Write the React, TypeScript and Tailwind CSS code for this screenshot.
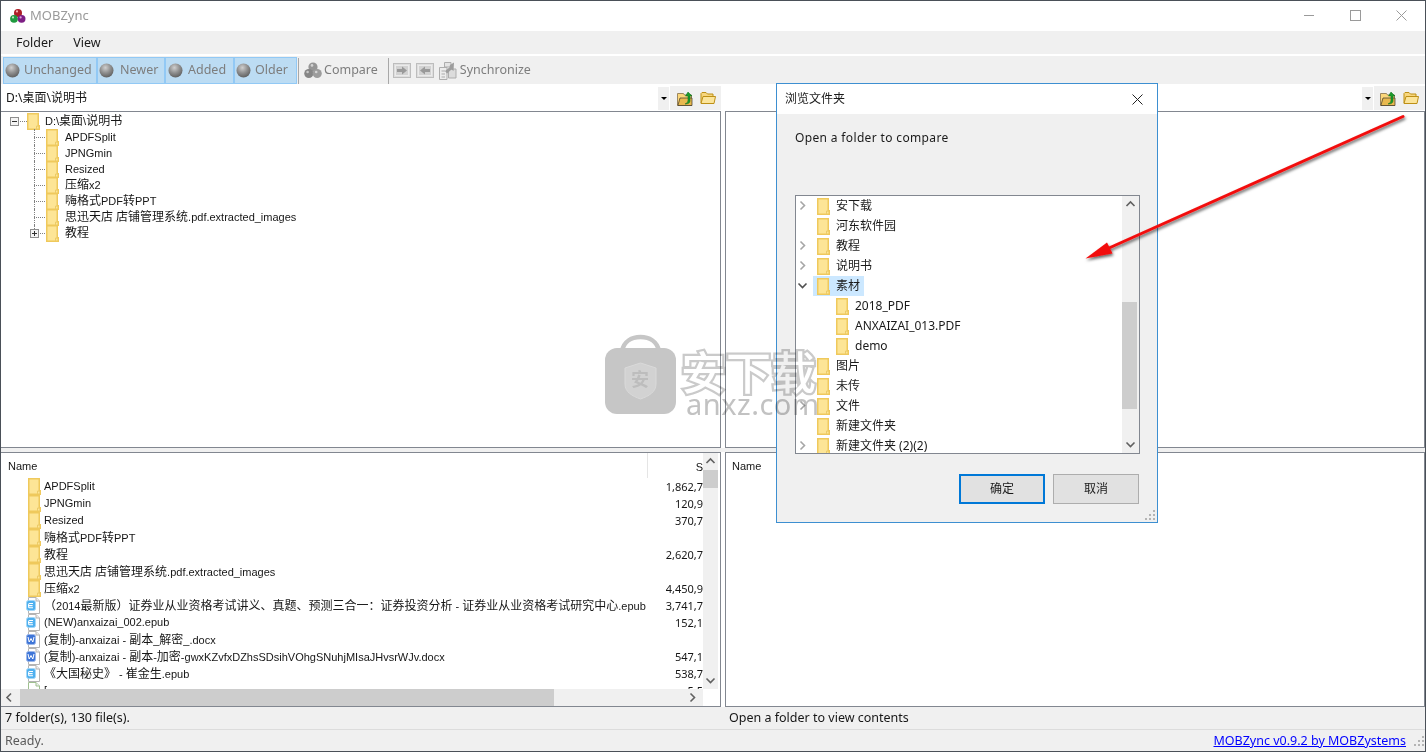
import React from "react";

const FONT = "[font-family:'Noto_Sans','Noto_Sans_CJK_SC',sans-serif]";

function Mix({ text }: { text: string }) {
  const parts = text.split(/([\u0000-\u00ff]+)/).filter(Boolean);
  return (
    <>
      {parts.map((p, i) =>
        /^[\u0000-\u00ff]+$/.test(p) ? (
          <span key={i} className="text-[11px] [font-family:'Liberation_Sans',sans-serif]">{p}</span>
        ) : (
          <span key={i} className="text-[12px]">{p}</span>
        )
      )}
    </>
  );
}

function Folder() {
  return (
    <svg width="13" height="17" viewBox="0 0 13 17" className="shrink-0">
      <path d="M0.75 0.75H11.25V12.75H12.25V16.25H0.75Z" fill="#fde596" stroke="#efc95c" strokeWidth="1.5" />
      <path d="M9.5 16V13H11.5" fill="none" stroke="#eccb68" />
    </svg>
  );
}

function Orb() {
  return (
    <svg width="18" height="18" viewBox="0 0 18 18" className="shrink-0">
      <defs>
        <radialGradient id="orb" cx="42%" cy="30%" r="72%">
          <stop offset="0" stopColor="#cfcfcf" />
          <stop offset="0.5" stopColor="#929292" />
          <stop offset="1" stopColor="#5e5e5e" />
        </radialGradient>
      </defs>
      <circle cx="8.5" cy="8.5" r="7" fill="url(#orb)" />
    </svg>
  );
}

function Toggle({ label, w, orb, text }: { label: string; w: string; orb: string; text: string }) {
  return (
    <div className={`flex items-center h-[27px] bg-[#bcdcf3] border border-[#92c9f5] text-[#7d7d7d] ${w}`}>
      <span className={orb}><Orb /></span>
      <span className={text}>{label}</span>
    </div>
  );
}

function Logo() {
  return (
    <svg width="16" height="16" viewBox="0 0 16 16" className="shrink-0">
      <circle cx="8" cy="5" r="4" fill="#ad1f27" />
      <circle cx="4" cy="10.8" r="3.9" fill="#1f9a3f" />
      <circle cx="11.6" cy="10.8" r="3.9" fill="#7d1e84" />
      <circle cx="7" cy="3.4" r="1.1" fill="#f3b2b2" />
      <circle cx="3" cy="9.4" r="1.1" fill="#b8e8c0" />
      <circle cx="10.6" cy="9.4" r="1.1" fill="#dfa4db" />
    </svg>
  );
}

function CompareIcon() {
  return (
    <svg width="18" height="17" viewBox="0 0 18 17" className="shrink-0">
      <circle cx="9" cy="5" r="4.6" fill="#969696" />
      <circle cx="4.8" cy="11.5" r="4.6" fill="#868686" />
      <circle cx="13.2" cy="11.5" r="4.6" fill="#9c9c9c" />
      <circle cx="8" cy="3.4" r="1.3" fill="#d4d4d4" />
      <circle cx="3.6" cy="10" r="1.3" fill="#c8c8c8" />
      <circle cx="12.2" cy="10" r="1.3" fill="#d4d4d4" />
    </svg>
  );
}

function CopyIcon({ flip = false }: { flip?: boolean }) {
  return (
    <svg width="18" height="15" viewBox="0 0 18 15" className="shrink-0">
      <rect x="0.5" y="0.5" width="17" height="14" fill="#dedede" stroke="#bdbdbd" />
      <rect x="2.5" y="2.5" width="13" height="10" fill="#d2d2d2" stroke="#ebebeb" />
      <path d={flip ? "M4 7.5L9 3.5V6H14V9H9V11.5Z" : "M14 7.5L9 3.5V6H4V9H9V11.5Z"} fill="#9a9a9a" />
    </svg>
  );
}

function SyncIcon() {
  return (
    <svg width="18" height="18" viewBox="0 0 18 18" className="shrink-0">
      <path d="M5.5 0.5H12V5H5.5Z" fill="#e4e4e4" stroke="#adadad" />
      <path d="M0.5 5.5H8V17.5H0.5Z" fill="#ececec" stroke="#adadad" />
      <path d="M9.5 7H17V16H9.5Z" fill="#dcdcdc" stroke="#adadad" />
      <path d="M11 3L15 0.5L14.5 9L12.5 7.5L8 11.5L6 9L10.5 5.5Z" fill="#9d9d9d" />
      <path d="M2.5 9H6M2.5 12H6M2.5 15H6" stroke="#ababab" />
    </svg>
  );
}

function UpFolder() {
  return (
    <svg width="16" height="15" viewBox="0 0 16 15" className="shrink-0">
      <path d="M0.5 2.5H6.5L7.5 4H14.5V14.5H0.5Z" fill="#fbd679" stroke="#9b8660" />
      <path d="M1 14L3 7H15V14.5H1Z" fill="#e8b84e" stroke="#3a3428" strokeWidth="0.7" />
      <path d="M11 1L15 5H13V10C13 12 11 13 8 13C10 12 11 11 11 9V5H8.5Z" fill="#1c9a2b" stroke="#0a6b18" strokeWidth="0.5" />
    </svg>
  );
}

function OpenFolder() {
  return (
    <svg width="16" height="14" viewBox="0 0 16 14" className="shrink-0">
      <path d="M1 12V2.5L2 1.5H6L7.5 3H13V5" fill="#f7d67e" stroke="#bd8f15" />
      <path d="M1 12.5L3 5.5H15.5L14 12.5Z" fill="#fbe49a" stroke="#bd8f15" />
    </svg>
  );
}

function PathTools({ pr, gap, dropRight }: { pr: string; gap: string; dropRight: string }) {
  return (
    <>
      <span className={`absolute ${dropRight} top-[3px] w-[11px] h-[23px] bg-[#f0f0f0] flex items-center justify-center`}>
        <span className="w-0 h-0 border-l-[3px] border-r-[3px] border-t-[3px] border-l-transparent border-r-transparent border-t-black" />
      </span>
      <span className={`absolute right-0 top-[2px] w-[51px] h-[24px] bg-[#f0f0f0] flex items-center justify-end ${gap} ${pr}`}>
        <UpFolder /><OpenFolder />
      </span>
    </>
  );
}

function FileIcon({ kind }: { kind: "e" | "w" | "g" }) {
  const badge = kind === "w" ? "#3f76d8" : "#4fb0ef";
  const edge = kind === "w" ? "#9db8ea" : "#a5d8f8";
  const line = kind === "g" ? "#9fc08f" : "#b4b4b4";
  return (
    <svg width="14" height="17" viewBox="0 0 14 17" className="shrink-0">
      <path d="M2.5 0.5H10L13.5 4V16.5H2.5Z" fill="#fff" stroke={line} />
      <path d="M10 0.5V4H13.5" fill="#f0f0f0" stroke={line} />
      {kind !== "g" && <rect x="0.5" y="3.5" width="9" height="10" rx="2" fill={badge} stroke={edge} />}
      {kind === "e" && <path d="M7 6.5H3.4C2.6 6.5 2.5 7 2.5 8.5S2.6 10.8 3.4 10.8H7M2.6 8.6H6.6" fill="none" stroke="#fff" strokeWidth="1.1" />}
      {kind === "w" && <path d="M2 6L3.2 11L5 7.5L6.8 11L8 6" fill="none" stroke="#fff" strokeWidth="1" />}
    </svg>
  );
}

function Chevron({ dir, className = "", color = "#606060" }: { dir: "up" | "down" | "left" | "right"; className?: string; color?: string }) {
  const d = {
    up: "M1.5 7L5.5 3L9.5 7",
    down: "M1.5 3.5L5.5 7.5L9.5 3.5",
    left: "M7 1.5L3 5.5L7 9.5",
    right: "M3.5 1.5L7.5 5.5L3.5 9.5",
  }[dir];
  return (
    <svg width="11" height="11" viewBox="0 0 11 11" className={"shrink-0 " + className}>
      <path d={d} fill="none" stroke={color} strokeWidth="1.6" />
    </svg>
  );
}

function ExpandBox({ open }: { open: boolean }) {
  return (
    <svg width="9" height="9" viewBox="0 0 9 9" className="shrink-0">
      <rect x="0.5" y="0.5" width="8" height="8" fill="#f4f4f4" stroke="#8e8e8e" />
      <path d={open ? "M2 4.5H7" : "M2 4.5H7M4.5 2V7"} stroke="#303030" />
    </svg>
  );
}

function Grip() {
  return (
    <svg width="12" height="12" viewBox="0 0 12 12" className="shrink-0">
      <g fill="#b4b4b4">
        <rect x="9" y="1" width="2" height="2" />
        <rect x="5" y="5" width="2" height="2" />
        <rect x="9" y="5" width="2" height="2" />
        <rect x="1" y="9" width="2" height="2" />
        <rect x="5" y="9" width="2" height="2" />
        <rect x="9" y="9" width="2" height="2" />
      </g>
    </svg>
  );
}

const TREE = [
  "APDFSplit",
  "JPNGmin",
  "Resized",
  "压缩x2",
  "嗨格式PDF转PPT",
  "思迅天店 店铺管理系统.pdf.extracted_images",
];

function TreeRow({ label, plus = false, last = false }: { label: string; plus?: boolean; last?: boolean }) {
  return (
    <div className="relative flex items-center h-4 pl-[45px]">
      <span className={`absolute left-[33px] top-0 border-l border-dotted border-[#808080] ${last ? "h-2" : "h-4"}`} />
      <span className="absolute left-[33px] top-2 w-[11px] border-t border-dotted border-[#808080]" />
      {plus && <span className="absolute left-[29px] top-[4px]"><ExpandBox open={false} /></span>}
      <Folder />
      <span className="ml-[6px] whitespace-nowrap"><Mix text={label} /></span>
    </div>
  );
}

const FILES: { name: string; size: string; icon: "f" | "e" | "w" | "g" }[] = [
  { name: "APDFSplit", size: "1,862,7", icon: "f" },
  { name: "JPNGmin", size: "120,9", icon: "f" },
  { name: "Resized", size: "370,7", icon: "f" },
  { name: "嗨格式PDF转PPT", size: "", icon: "f" },
  { name: "教程", size: "2,620,7", icon: "f" },
  { name: "思迅天店 店铺管理系统.pdf.extracted_images", size: "", icon: "f" },
  { name: "压缩x2", size: "4,450,9", icon: "f" },
  { name: "（2014最新版）证券业从业资格考试讲义、真题、预测三合一：证券投资分析 - 证券业从业资格考试研究中心.epub", size: "3,741,7", icon: "e" },
  { name: "(NEW)anxaizai_002.epub", size: "152,1", icon: "e" },
  { name: "(复制)-anxaizai - 副本_解密_.docx", size: "", icon: "w" },
  { name: "(复制)-anxaizai - 副本-加密-gwxKZvfxDZhsSDsihVOhgSNuhjMIsaJHvsrWJv.docx", size: "547,1", icon: "w" },
  { name: "《大国秘史》 - 崔金生.epub", size: "538,7", icon: "e" },
  { name: "[", size: "5,5", icon: "g" },
];

const DIALOG_TREE: { label: string; depth: 0 | 1; arrow?: "right" | "down"; sel?: boolean }[] = [
  { label: "安下载", depth: 0, arrow: "right" },
  { label: "河东软件园", depth: 0 },
  { label: "教程", depth: 0, arrow: "right" },
  { label: "说明书", depth: 0, arrow: "right" },
  { label: "素材", depth: 0, arrow: "down", sel: true },
  { label: "2018_PDF", depth: 1 },
  { label: "ANXAIZAI_013.PDF", depth: 1 },
  { label: "demo", depth: 1 },
  { label: "图片", depth: 0 },
  { label: "未传", depth: 0 },
  { label: "文件", depth: 0, arrow: "right" },
  { label: "新建文件夹", depth: 0 },
  { label: "新建文件夹 (2)(2)", depth: 0, arrow: "right" },
];

function Dialog() {
  return (
    <div className="absolute left-[775px] top-[82px] w-[382px] h-[440px] z-10 border border-[#3d8fd1] bg-[#f0f0f0] flex flex-col text-[12px] text-[#1a1a1a]">
      <div className="h-[30px] bg-white flex items-center justify-between pl-2 pr-[14px] shrink-0">
        <span>浏览文件夹</span>
        <svg width="11" height="11" viewBox="0 0 11 11"><path d="M0.5 0.5L10.5 10.5M10.5 0.5L0.5 10.5" stroke="#222" /></svg>
      </div>
      <div className="pl-[18px] pt-[15px] h-[81px] shrink-0 tracking-[0.35px]">Open a folder to compare</div>
      <div className="ml-[18px] w-[345px] h-[259px] border border-[#828790] bg-white flex overflow-hidden shrink-0">
        <div className="flex-1 flex flex-col overflow-hidden">
          {DIALOG_TREE.map((r) => (
            <div key={r.label} className={`flex items-center h-5 shrink-0 ${r.depth ? "pl-[40px]" : "pl-[21px]"} relative`}>
              {r.arrow && <span className="absolute left-[1px] top-[4px]"><Chevron dir={r.arrow} color={r.arrow === "down" ? "#505050" : "#a6a6a6"} /></span>}
              {r.sel && <span className="absolute left-[17px] top-0 w-[51px] h-5 bg-[#cce8ff]" />}
              <span className="relative flex items-center">
                <Folder />
                <span className="ml-[6px] whitespace-nowrap">{r.label}</span>
              </span>
            </div>
          ))}
        </div>
        <div className="w-[17px] bg-[#f0f0f0] flex flex-col items-center justify-between shrink-0 relative">
          <Chevron dir="up" className="mt-[3px]" />
          <span className="absolute left-0 top-[106px] w-[15px] h-[107px] bg-[#cdcdcd]" />
          <Chevron dir="down" className="mb-[3px]" />
        </div>
      </div>
      <div className="flex justify-end gap-[8px] pr-[18px] pt-[20px]">
        <div className="w-[86px] h-[30px] bg-[#e1e1e1] border-2 border-[#0078d7] flex items-center justify-center">确定</div>
        <div className="w-[86px] h-[30px] bg-[#e1e1e1] border border-[#adadad] flex items-center justify-center">取消</div>
      </div>
      <span className="absolute right-[1px] bottom-[1px]"><Grip /></span>
    </div>
  );
}

function Arrow() {
  return (
    <svg width="1426" height="752" viewBox="0 0 1426 752" className="absolute left-[-1px] top-[-1px] z-20 pointer-events-none">
      <defs>
        <filter id="sh" x="-10%" y="-20%" width="120%" height="140%">
          <feDropShadow dx="1" dy="2" stdDeviation="1.5" floodColor="#000" floodOpacity="0.6" />
        </filter>
      </defs>
      <g filter="url(#sh)">
        <path d="M1403 116.5L1109 248" fill="none" stroke="#f20d0d" strokeWidth="3" strokeLinecap="round" />
        <path d="M1085.5 258.5L1107 242.5L1112.5 253.5Z" fill="#f20d0d" />
      </g>
    </svg>
  );
}

function Watermark() {
  return (
    <div className="absolute left-[604px] top-[333px] z-30 flex items-start gap-[5px] pointer-events-none mix-blend-multiply">
      <div className="relative w-[71px] h-[81px] shrink-0">
        <svg width="71" height="81" viewBox="0 0 71 81" className="absolute left-0 top-0">
          <path d="M17 17C19 7 27 3 35.5 3C44 3 52 7 54 17" fill="none" stroke="#c6c6c6" strokeWidth="4.5" />
          <rect x="0" y="14" width="71" height="66" rx="12" fill="#c6c6c6" />
          <path d="M35.5 29L51 34V50C51 58 44 62 35.5 65C27 62 20 58 20 50V34Z" fill="#d2d2d2" stroke="#dadada" />
        </svg>
        <span className="absolute left-[26px] top-[32px] text-[18px] leading-[24px] text-[#bdbdbd] font-bold [font-family:'Noto_Sans_CJK_SC',sans-serif]">安</span>
      </div>
      <div className="flex flex-col mt-[12px] [font-family:'Noto_Sans_CJK_SC','Noto_Sans',sans-serif]">
        <span className="text-[45px] leading-[50px] font-medium text-white [-webkit-text-stroke:4.5px_#cacaca] [paint-order:stroke_fill] whitespace-nowrap">安下载</span>
        <span className="text-[29px] leading-[30px] text-[#c2c2c2] tracking-[0.5px] [font-family:'Noto_Sans',sans-serif] -mt-[7px] ml-[5px]">anxz.com</span>
      </div>
    </div>
  );
}

export default function App() {
  return (
    <div className={`relative w-[1426px] h-[752px] overflow-hidden bg-white text-[11px] text-[#161616] border border-[#4a5058] flex flex-col ${FONT}`}>
      {/* title bar */}
      <div className="h-[30px] shrink-0 bg-white flex items-center pl-[9px] relative">
        <Logo />
        <span className="ml-[4px] text-[13px] text-[#9a9a9a]">MOBZync</span>
        <div className="absolute right-[18px] top-[9px] flex items-center gap-[35px]">
          <svg width="11" height="11" viewBox="0 0 11 11"><path d="M0 5.5H10" stroke="#9a9a9a" /></svg>
          <svg width="11" height="11" viewBox="0 0 11 11"><rect x="0.5" y="0.5" width="10" height="10" fill="none" stroke="#9a9a9a" /></svg>
          <svg width="11" height="11" viewBox="0 0 11 11"><path d="M0.5 0.5L10.5 10.5M10.5 0.5L0.5 10.5" stroke="#9a9a9a" /></svg>
        </div>
      </div>
      {/* menu */}
      <div className="h-[25px] shrink-0 bg-[#f0f0f0] flex items-center text-[12.5px] text-[#1a1a1a] pl-[15px] pt-[2px] gap-[20px] border-b-2 border-white">
        <span>Folder</span>
        <span>View</span>
      </div>
      {/* toolbar */}
      <div className="h-[28px] shrink-0 bg-[#f0f0f0] flex items-end pl-[2px] text-[12.5px]">
        <Toggle label="Unchanged" w="w-[94px]" orb="" text="ml-[2px]" />
        <Toggle label="Newer" w="w-[68px]" orb="" text="ml-[4px]" />
        <Toggle label="Added" w="w-[69px]" orb="ml-[1px]" text="ml-[3px]" />
        <Toggle label="Older" w="w-[63px]" orb="" text="ml-[2px]" />
        <span className="ml-[1px] w-[1px] h-[26px] bg-[#a8a8a8]" />
        <div className="flex items-center h-[27px] ml-[5px] text-[#7d7d7d] gap-[2px]"><CompareIcon /><span>Compare</span></div>
        <span className="ml-[10px] w-[1px] h-[26px] bg-[#a8a8a8]" />
        <div className="flex items-center h-[27px] ml-[4px] gap-[5px] text-[#7d7d7d]">
          <CopyIcon />
          <CopyIcon flip />
          <SyncIcon />
          <span className="-ml-[2px]">Synchronize</span>
        </div>
      </div>
      {/* path row */}
      <div className="h-[27px] shrink-0 flex text-[12px]">
        <div className="w-[720px] flex items-center pl-[5px] relative shrink-0">
          <span>D:\桌面\说明书</span>
          <PathTools pr="pr-[5px]" gap="gap-[7px]" dropRight="right-[52px]" />
        </div>
        <div className="ml-[4px] flex-1 relative">
          <PathTools pr="pr-[6px]" gap="gap-[7px]" dropRight="right-[52px]" />
        </div>
      </div>
      {/* tree panels */}
      <div className="h-[337px] shrink-0 flex gap-[4px]">
        <div className="w-[720px] border border-[#828790] border-l-0 bg-white pt-[1px] overflow-hidden shrink-0">
          <div className="relative flex items-center h-4 pl-[26px]">
            <span className="absolute left-[9px] top-[4px]"><ExpandBox open /></span>
            <span className="absolute left-[19px] top-2 w-[7px] border-t border-dotted border-[#808080]" />
            <Folder />
            <span className="ml-[5px] whitespace-nowrap"><Mix text="D:\桌面\说明书" /></span>
          </div>
          {TREE.map((t) => <TreeRow key={t} label={t} />)}
          <TreeRow label="教程" plus last />
        </div>
        <div className="flex-1 border border-[#828790] bg-white" />
      </div>
      {/* spacer */}
      <div className="h-[4px] shrink-0 bg-[#f0f0f0]" />
      {/* list panels */}
      <div className="h-[255px] shrink-0 flex gap-[4px]">
        <div className="w-[720px] border border-[#828790] border-l-0 bg-white shrink-0 flex overflow-hidden">
          <div className="flex-1 min-w-0 flex flex-col">
            <div className="h-[25px] shrink-0 flex items-center pl-[7px] pt-[1px] relative [font-family:'Liberation_Sans',sans-serif]">
              <span>Name</span>
              <span className="absolute left-[646px] top-0 h-[25px] w-[1px] bg-[#e5e5e5]" />
              <span className="absolute right-0 top-[6px]">S</span>
            </div>
            <div className="flex-1 min-h-0 overflow-hidden">
              {FILES.map((f) => (
                <div key={f.name} className={`flex items-center h-[17px] relative ${f.icon === "f" ? "pl-[27px]" : "pl-[25px]"}`}>
                  {f.icon === "f" ? <Folder /> : <FileIcon kind={f.icon} />}
                  <span className={`whitespace-nowrap ${f.icon === "f" ? "ml-[3px]" : "ml-[4px]"}`}><Mix text={f.name} /></span>
                  {f.size && <span className="absolute right-0 top-0 bg-white pl-1 leading-[17px]">{f.size}</span>}
                </div>
              ))}
            </div>
            <div className="h-[17px] shrink-0 bg-[#f0f0f0] flex items-center justify-between relative pr-[5px] pl-[3px]">
              <Chevron dir="left" />
              <span className="absolute left-[19px] top-0 h-[17px] w-[534px] bg-[#cdcdcd]" />
              <Chevron dir="right" />
            </div>
          </div>
          <div className="w-[17px] shrink-0 flex flex-col">
            <div className="w-[15px] h-[236px] shrink-0 bg-[#f0f0f0] flex flex-col items-center justify-between relative">
              <Chevron dir="up" className="mt-[3px]" />
              <span className="absolute left-0 top-[17px] w-[15px] h-[18px] bg-[#cdcdcd]" />
              <Chevron dir="down" className="mb-[3px]" />
            </div>
          </div>
        </div>
        <div className="flex-1 border border-[#828790] bg-white">
          <div className="h-[25px] flex items-center pl-[6px] pt-[1px] [font-family:'Liberation_Sans',sans-serif]">Name</div>
        </div>
      </div>
      {/* status */}
      <div className="h-[23px] shrink-0 bg-[#f0f0f0] border-b border-[#dcdcdc] flex items-center pt-[1px] text-[12.5px]">
        <span className="w-[724px] pl-[4px] shrink-0">7 folder(s), 130 file(s).</span>
        <span className="pl-[4px]">Open a folder to view contents</span>
      </div>
      <div className="flex-1 min-h-0 bg-[#f0f0f0] flex items-center justify-between text-[12.5px] pl-[4px] relative">
        <span className="text-[#5a5a5a] relative top-[1px]">Ready.</span>
        <span className="flex items-center">
          <span className="text-[#0000ff] underline mr-[7px] relative top-[1px]">MOBZync v0.9.2 by MOBZystems</span>
          <Grip />
        </span>
      </div>
      <Dialog />
      <Arrow />
      <Watermark />
    </div>
  );
}
